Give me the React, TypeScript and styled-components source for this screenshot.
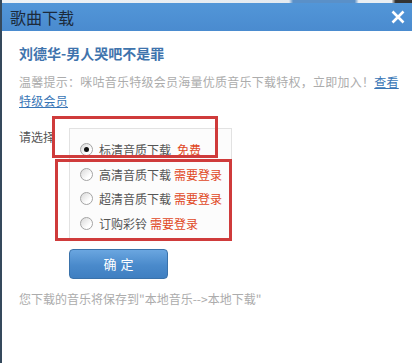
import styled, { createGlobalStyle } from "styled-components";

const Global = createGlobalStyle`
  html, body {
    margin: 0;
    padding: 0;
    background: #fff;
  }
  body {
    font-family: "Noto Sans CJK SC", "Noto Sans", sans-serif;
  }
`;

const Page = styled.div`
  position: relative;
  width: 412px;
  height: 363px;
  box-sizing: border-box;
  border-left: 2px solid #35495c;
  background: #fff;
  overflow: hidden;
`;

const TopStrip = styled.div`
  height: 3px;
  background: linear-gradient(90deg, #eef2f6 0%, #e4eaf0 70%, #5a90c8 71%, #5a90c8 86%, #e9eef3 87%, #e9eef3 95%, #333 96%);
`;

const TitleBar = styled.div`
  height: 28px;
  display: flex;
  align-items: center;
  justify-content: space-between;
  padding: 0 7px 0 8px;
  background: linear-gradient(180deg, #5296d8 0%, #4a8bcf 100%);
`;

const Title = styled.div`
  font-size: 16px;
  line-height: 20px;
  color: #1c2a3b;
`;

const Close = styled.svg`
  width: 14px;
  height: 14px;
  display: block;
`;

const Body = styled.div`
  padding: 12px 12px 0 17px;
`;

const SongTitle = styled.div`
  font-size: 14px;
  line-height: 20px;
  font-weight: bold;
  color: #3f74ad;
`;

const Hint = styled.div`
  margin-top: 9px;
  font-size: 12px;
  line-height: 19px;
  color: #acacac;
  letter-spacing: 0.25px;
`;

const Link = styled.a`
  color: #3976b6;
  text-decoration: underline;
`;

const ChooseRow = styled.div`
  display: flex;
  margin-top: 18px;
`;

const Label = styled.div`
  width: 50px;
  padding-top: 1px;
  font-size: 12px;
  line-height: 16px;
  color: #555;
`;

const OptionsBox = styled.div`
  width: 163px;
  box-sizing: border-box;
  border: 1px solid #e2e2e2;
  border-bottom: none;
  background: #fcfcfc;
  padding: 8px 0 2px 10px;
`;

const Option = styled.div`
  display: flex;
  align-items: center;
  height: 24.7px;
  font-size: 12px;
  color: #555;
`;

const Radio = styled.span<{ $checked?: boolean }>`
  position: relative;
  width: 11px;
  height: 11px;
  border-radius: 50%;
  border: 1px solid #a4a4a4;
  background: linear-gradient(135deg, #d8d8d8 0%, #fff 70%);
  margin-right: 6px;
  flex: none;
  &::after {
    content: "";
    display: ${(p) => (p.$checked ? "block" : "none")};
    position: absolute;
    left: 3px;
    top: 3px;
    width: 5px;
    height: 5px;
    border-radius: 50%;
    background: #111;
  }
`;

const Tag = styled.span<{ $gap: number }>`
  color: #e0481f;
  margin-left: ${(p) => p.$gap}px;
`;

const Button = styled.button`
  display: block;
  margin: 11px 0 0 50px;
  width: 99px;
  height: 30px;
  border: 1px solid #3a72aa;
  border-radius: 4px;
  background: linear-gradient(180deg, #6aa6e0 0%, #4a8acb 55%, #3f7fc1 100%);
  color: #fff;
  font-family: "Noto Sans CJK SC", sans-serif;
  font-size: 13px;
  letter-spacing: 4px;
  text-indent: 4px;
  padding: 0;
`;

const Footer = styled.div`
  margin-top: 12px;
  font-size: 12px;
  line-height: 16px;
  color: #acacac;
`;

const Mark = styled.div<{ $l: number; $t: number; $w: number; $h: number }>`
  position: absolute;
  left: ${(p) => p.$l}px;
  top: ${(p) => p.$t}px;
  width: ${(p) => p.$w}px;
  height: ${(p) => p.$h}px;
  box-sizing: border-box;
  border: 3px solid #cf3b3b;
  pointer-events: none;
`;

const options = [
  { text: "标清音质下载", tag: "免费", gap: 6, checked: true },
  { text: "高清音质下载", tag: "需要登录", gap: 3 },
  { text: "超清音质下载", tag: "需要登录", gap: 3 },
  { text: "订购彩铃", tag: "需要登录", gap: 3 },
];

function App() {
  return (
    <>
      <Global />
      <Page>
        <TopStrip />
        <TitleBar>
          <Title>歌曲下载</Title>
          <Close viewBox="0 0 14 14">
            <path d="M1.5 1.5 L12.5 12.5 M12.5 1.5 L1.5 12.5" stroke="#fff" strokeWidth="2.6" />
          </Close>
        </TitleBar>
        <Body>
          <SongTitle>刘德华-男人哭吧不是罪</SongTitle>
          <Hint>
            温馨提示：咪咕音乐特级会员海量优质音乐下载特权，立即加入！
            <Link>查看特级会员</Link>
          </Hint>
          <ChooseRow>
            <Label>请选择</Label>
            <OptionsBox>
              {options.map((o) => (
                <Option key={o.text}>
                  <Radio $checked={o.checked} />
                  {o.text}
                  <Tag $gap={o.gap}>{o.tag}</Tag>
                </Option>
              ))}
            </OptionsBox>
          </ChooseRow>
          <Button>确定</Button>
          <Footer>您下载的音乐将保存到"本地音乐--&gt;本地下载"</Footer>
        </Body>
        <Mark $l={50} $t={116} $w={166} $h={42} />
        <Mark $l={53} $t={159} $w={177} $h={82} />
      </Page>
    </>
  );
}

export default App;
